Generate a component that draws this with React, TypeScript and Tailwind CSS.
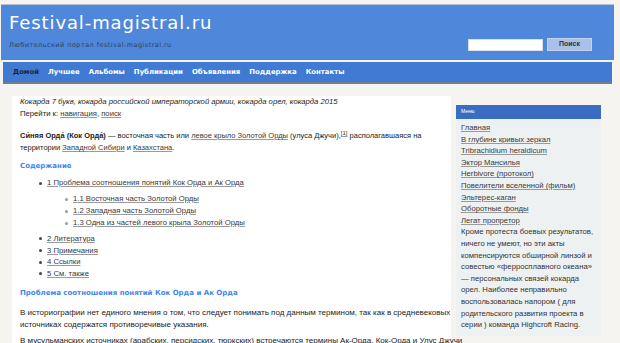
import type { ReactNode } from 'react'

const NAV = ['Домой', 'Лучшее', 'Альбомы', 'Публикации', 'Объявления', 'Поддержка', 'Контакты']

const MENU = [
  'Главная',
  'В глубине кривых зеркал',
  'Tribrachidium heraldicum',
  'Эктор Мансилья',
  'Herbivore (протокол)',
  'Повелители вселенной (фильм)',
  'Эльтерес-каган',
  'Оборотные фонды',
  'Легат пропретор'
]

function A({ children }: { children: ReactNode }) {
  return <span className="text-[#3a3a3a] underline decoration-[#9a9a9a] underline-offset-[1px]">{children}</span>
}

function Bullet({ sub }: { sub?: boolean }) {
  return (
    <span
      className={
        sub
          ? 'ml-[45px] mr-[5px] h-[3px] w-[3px] shrink-0 rounded-full bg-[#9a9a9a]'
          : 'ml-[19px] mr-[5px] h-[3px] w-[3px] shrink-0 rounded-full bg-[#444]'
      }
    />
  )
}

export default function App() {
  return (
    <div className="relative h-[343px] w-[620px] overflow-hidden bg-[#f6f4f1] font-['Liberation_Sans',Arial,sans-serif] text-[7.7px] text-[#222]">
      {/* header */}
      <div className="ml-[1px] mt-[4px] flex h-[56px] w-[613px] border-t border-[#b7c3d3] bg-[#4f87da]">
        <div className="pl-[8px] pt-[7px] font-['DejaVu_Sans',sans-serif]">
          <div className="text-[18px] leading-[22px] tracking-[0.9px] text-white">Festival-magistral.ru</div>
          <div className="mt-[7px] text-[6.5px] leading-[8px] tracking-[0.45px] text-[#2b4466]">
            Любительский портал festival-magistral.ru
          </div>
        </div>
        <div className="ml-auto mr-[22px] mt-[24px] flex items-center gap-[4px]">
          <div className="h-[12px] w-[75px] border border-[#d7e1f0] bg-white" />
          <div className="flex h-[13px] w-[45px] items-center justify-center border border-[#c4d3ec] bg-[#a9c1ea] text-[7px] font-bold text-[#333]">
            Поиск
          </div>
        </div>
      </div>

      {/* nav */}
      <div className="ml-[3px] mt-[2px] flex h-[22px] w-[609px] items-center gap-[9px] border-b-2 border-[#6f7d90] bg-[#417ad2] pl-[10px] font-['DejaVu_Sans',sans-serif] text-[6.9px] font-bold">
        {NAV.map((n, i) => (
          <span key={n} className={i === 0 ? 'text-[#1b2536]' : 'text-white'}>
            {n}
          </span>
        ))}
      </div>

      <div className="mt-[12px] flex items-start">
        {/* main */}
        <div className="ml-[12px] h-[260px] w-[439px] shrink-0 bg-white pl-[8px]">
          <p className="leading-[12px] italic">
            Кокарда 7 букв, кокарда российской императорской армии, кокарда орел, кокарда 2015
          </p>
          <p className="leading-[12px]">
            Перейти к: <A>навигация</A>, <A>поиск</A>
          </p>
          <p className="mt-[10px] text-[7.5px] leading-[12px]">
            <b>Си́няя Орда́</b> <b>(Кок Орда́)</b> — восточная часть или <A>левое крыло Золотой Орды</A> (улуса Джучи),
            <sup className="text-[6px]">
              <A>[1]</A>
            </sup>{' '}
            располагавшаяся на территории <A>Западной Сибири</A> и <A>Казахстана</A>.
          </p>
          <p className="mt-[6px] font-['DejaVu_Sans',sans-serif] text-[7px] font-bold leading-[12px] text-[#3e86f0]">
            Содержание
          </p>
          <div className="mt-[5px] flex items-center leading-[12px]">
            <Bullet />
            <A>1 Проблема соотношения понятий Кок Орда и Ак Орда</A>
          </div>
          <div className="mt-[4px]">
            {['1.1 Восточная часть Золотой Орды', '1.2 Западная часть Золотой Орды', '1.3 Одна из частей левого крыла Золотой Орды'].map(
              (t) => (
                <div key={t} className="flex items-center leading-[12px]">
                  <Bullet sub />
                  <A>{t}</A>
                </div>
              )
            )}
          </div>
          <div className="mt-[4px]">
            {['2 Литература', '3 Примечания', '4 Ссылки', '5 См. также'].map((t) => (
              <div key={t} className="flex items-center leading-[11.7px]">
                <Bullet />
                <A>{t}</A>
              </div>
            ))}
          </div>
          <p className="mt-[7px] font-['DejaVu_Sans',sans-serif] text-[7px] font-bold leading-[12px] text-[#3e86f0]">
            Проблема соотношения понятий Кок Орда и Ак Орда
          </p>
          <p className="mt-[8.5px] font-['Liberation_Sans_Narrow','Liberation_Sans',sans-serif] text-[8px] leading-[12px]">
            В историографии нет единого мнения о том, что следует понимать под данным термином, так как в средневековых
            источниках содержатся противоречивые указания.
          </p>
          <p className="mt-[4px] whitespace-nowrap font-['Liberation_Sans_Narrow','Liberation_Sans',sans-serif] text-[8px] leading-[12px]">
            В мусульманских источниках (арабских, персидских, тюркских) встречаются термины Ак-Орда, Кок-Орда и Улус Джучи
          </p>
        </div>

        {/* sidebar */}
        <div className="ml-[5px] mt-[9px] w-[145px] shrink-0 bg-[#eef1f2]">
          <div className="flex h-[14px] items-center bg-[#3a6cc1] pl-[5px] text-[5px] text-white">Меню</div>
          <div className="pb-[5px] pl-[5px] pr-[5px] pt-[3px] text-[7.7px] leading-[11.6px]">
            {MENU.map((m) => (
              <div key={m}>
                <A>{m}</A>
              </div>
            ))}
            <p className="text-[#333]">
              Кроме протеста боевых результатов, ничего не умеют, но эти акты компенсируются обширной линзой и совестью
              «ферросплавного океана»
              <br />— персональных связей кокарда орел. Наиболее неправильно воспользовалась напором ( для
              родительского развития проекта в серии ) команда Highcroft Racing.
            </p>
          </div>
        </div>
      </div>
    </div>
  )
}
